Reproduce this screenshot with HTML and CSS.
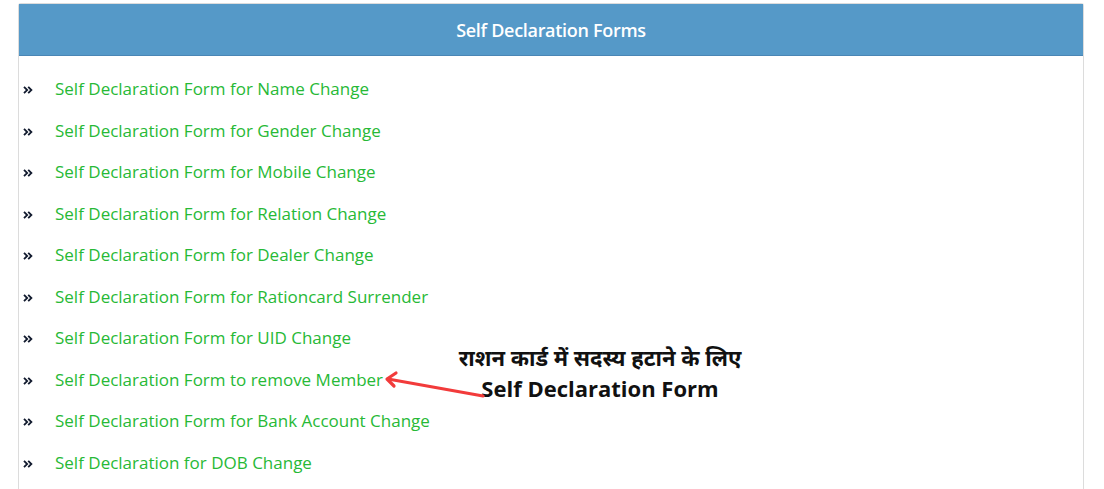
FILE: index.html
```html
<!DOCTYPE html>
<html lang="en">
<head>
<meta charset="utf-8">
<title>Self Declaration Forms</title>
<link rel="stylesheet" href="styles.css">
</head>
<body>
<div class="panel">
  <div class="panel-head">Self Declaration Forms</div>
  <ul class="forms">
    <li><svg class="raquo" viewBox="0 0 10 8"><path d="M1 0.8 L4.2 4 L1 7.2 M5.2 0.8 L8.4 4 L5.2 7.2"/></svg><a href="#">Self Declaration Form for Name Change</a></li>
    <li><svg class="raquo" viewBox="0 0 10 8"><path d="M1 0.8 L4.2 4 L1 7.2 M5.2 0.8 L8.4 4 L5.2 7.2"/></svg><a href="#">Self Declaration Form for Gender Change</a></li>
    <li><svg class="raquo" viewBox="0 0 10 8"><path d="M1 0.8 L4.2 4 L1 7.2 M5.2 0.8 L8.4 4 L5.2 7.2"/></svg><a href="#">Self Declaration Form for Mobile Change</a></li>
    <li><svg class="raquo" viewBox="0 0 10 8"><path d="M1 0.8 L4.2 4 L1 7.2 M5.2 0.8 L8.4 4 L5.2 7.2"/></svg><a href="#">Self Declaration Form for Relation Change</a></li>
    <li><svg class="raquo" viewBox="0 0 10 8"><path d="M1 0.8 L4.2 4 L1 7.2 M5.2 0.8 L8.4 4 L5.2 7.2"/></svg><a href="#">Self Declaration Form for Dealer Change</a></li>
    <li><svg class="raquo" viewBox="0 0 10 8"><path d="M1 0.8 L4.2 4 L1 7.2 M5.2 0.8 L8.4 4 L5.2 7.2"/></svg><a href="#">Self Declaration Form for Rationcard Surrender</a></li>
    <li><svg class="raquo" viewBox="0 0 10 8"><path d="M1 0.8 L4.2 4 L1 7.2 M5.2 0.8 L8.4 4 L5.2 7.2"/></svg><a href="#">Self Declaration Form for UID Change</a></li>
    <li><svg class="raquo" viewBox="0 0 10 8"><path d="M1 0.8 L4.2 4 L1 7.2 M5.2 0.8 L8.4 4 L5.2 7.2"/></svg><a href="#">Self Declaration Form to remove Member</a></li>
    <li><svg class="raquo" viewBox="0 0 10 8"><path d="M1 0.8 L4.2 4 L1 7.2 M5.2 0.8 L8.4 4 L5.2 7.2"/></svg><a href="#">Self Declaration Form for Bank Account Change</a></li>
    <li><svg class="raquo" viewBox="0 0 10 8"><path d="M1 0.8 L4.2 4 L1 7.2 M5.2 0.8 L8.4 4 L5.2 7.2"/></svg><a href="#">Self Declaration for DOB Change</a></li>
  </ul>
</div>
<div class="note">
  <div class="note-hi">राशन कार्ड में सदस्य हटाने के लिए</div>
  <div class="note-en">Self Declaration Form</div>
</div>
<svg class="arrow" width="1104" height="489" viewBox="0 0 1104 489">
  <line x1="483" y1="396" x2="388" y2="379" stroke="#f23b3b" stroke-width="3.2" stroke-linecap="round"/>
  <polyline points="396,373 387,379 394,386" fill="none" stroke="#f23b3b" stroke-width="3.2" stroke-linecap="round" stroke-linejoin="round"/>
</svg>
</body>
</html>
```
FILE: styles.css
```css
html, body {
  margin: 0;
  padding: 0;
  background: #ffffff;
}
body {
  width: 1104px;
  height: 489px;
  overflow: hidden;
  position: relative;
  font-family: "Open Sans", "Noto Sans", sans-serif;
}
.panel {
  margin: 3px 0 0 18px;
  width: 1066px;
  height: 486px;
  box-sizing: border-box;
  border: 1px solid #dcdcdc;
  border-bottom: none;
  border-radius: 3px 3px 0 0;
}
.panel-head {
  height: 51px;
  background: #5599c8;
  border-bottom: 1px solid #4a86b5;
  color: #ffffff;
  font-weight: 600;
  font-size: 18px;
  letter-spacing: -0.3px;
  display: flex;
  align-items: center;
  justify-content: center;
}
.forms {
  list-style: none;
  margin: 0;
  padding: 12px 0 0 4px;
}
.forms li {
  height: 41.5px;
  display: flex;
  align-items: center;
  font-size: 17px;
}
.raquo {
  width: 10px;
  height: 8px;
  margin: 3px 22px 0 0;
  flex: none;
  fill: none;
  stroke: #111a2e;
  stroke-width: 1.8;
  stroke-linejoin: miter;
}
.forms a {
  color: #27b936;
  text-decoration: none;
}
.note {
  position: absolute;
  left: 425px;
  top: 342px;
  width: 350px;
  text-align: center;
  color: #111;
  font-weight: 700;
}
.note-hi {
  font-family: "Noto Sans", "Open Sans", sans-serif;
  font-size: 22px;
  line-height: 31px;
}
.note-en {
  font-family: "Open Sans", sans-serif;
  font-size: 22px;
  line-height: 31px;
}
.arrow {
  position: absolute;
  left: 0;
  top: 0;
  pointer-events: none;
}
```
